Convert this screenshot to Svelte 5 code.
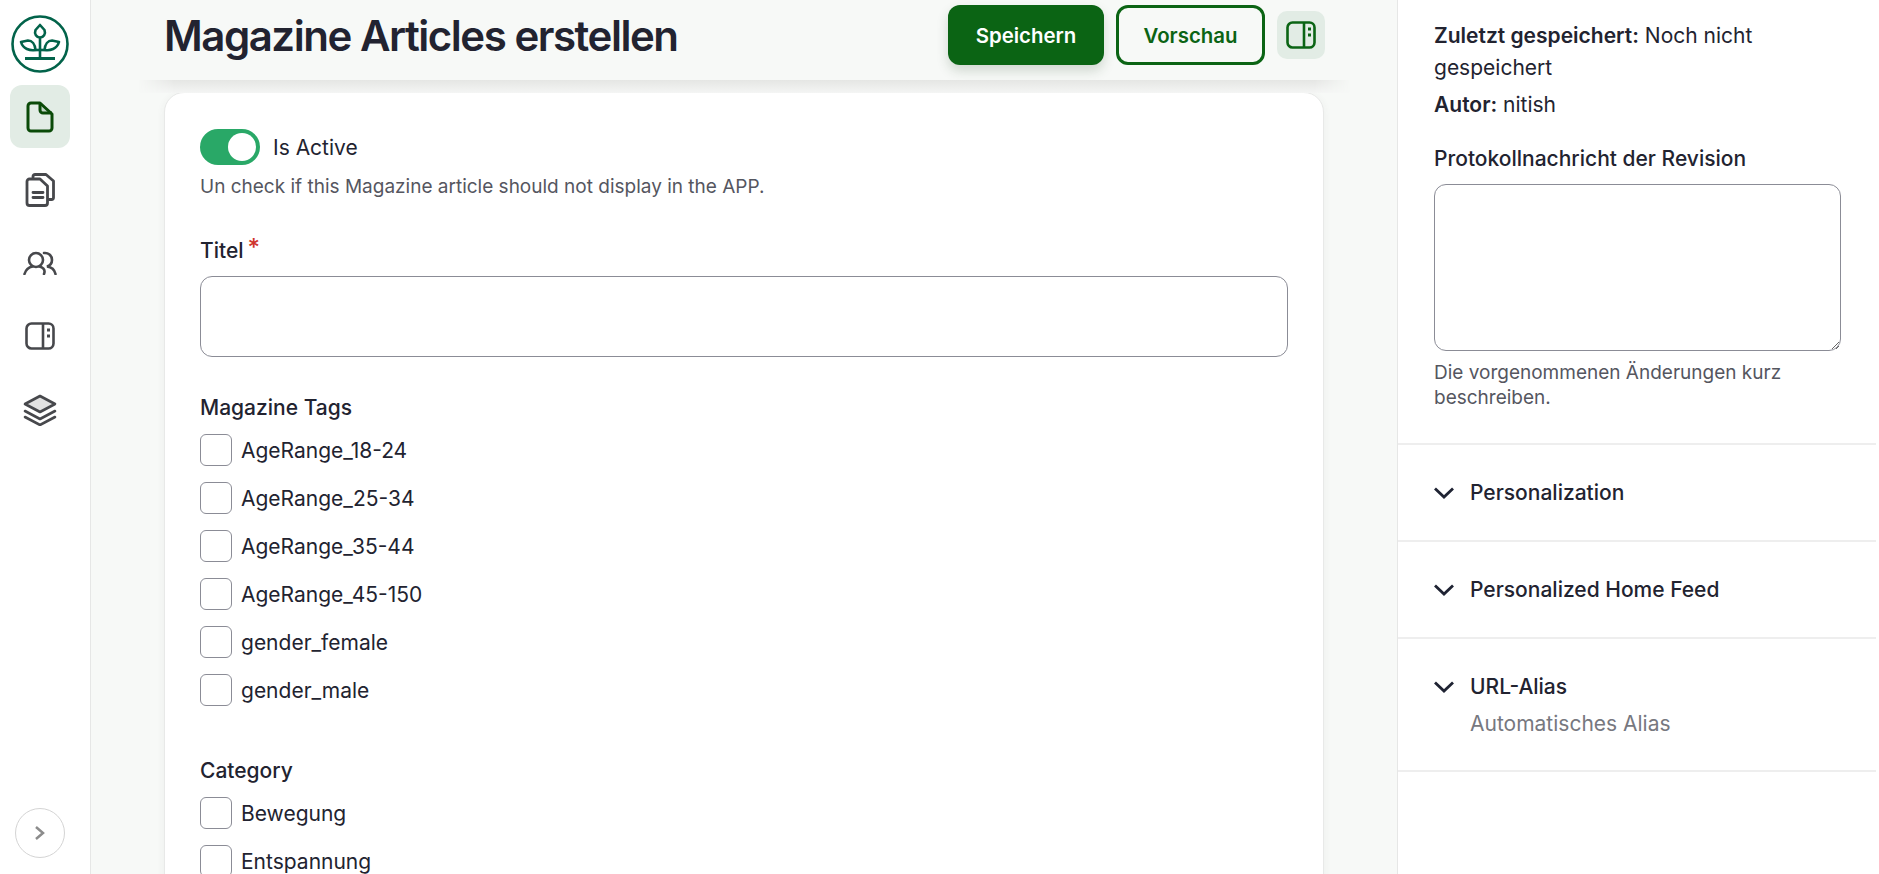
<script>
  const tags = ["AgeRange_18-24", "AgeRange_25-34", "AgeRange_35-44", "AgeRange_45-150", "gender_female", "gender_male"];
  const categories = ["Bewegung", "Entspannung"];
  const sections = [
    { title: "Personalization" },
    { title: "Personalized Home Feed" },
    { title: "URL-Alias", sub: "Automatisches Alias" }
  ];
</script>

<div class="page">
  <nav class="sidebar">
    <svg class="logo" viewBox="0 0 58 58" fill="none" stroke="#02634a" stroke-width="2.6" stroke-linejoin="round">
      <circle cx="29" cy="29" r="27.5" />
      <path d="M29 10 L33.500 15 C35 19 32.500 22.500 29 22.500 C25.500 22.500 23 19 24.500 15 Z" />
      <path d="M29 22.500 V43" />
      <path d="M10 27 L17 25.500 C21 25.500 24 29 24.500 35 C19 36 12 34 10 27 Z" />
      <path d="M48 27 L41 25.500 C37 25.500 34 29 33.500 35 C39 36 46 34 48 27 Z" />
      <path d="M24.500 35 H33.500" />
      <path d="M14 43.500 H44" stroke-width="3" />
    </svg>

    <a class="item active" href="#doc">
      <svg viewBox="0 0 28 32" width="28" height="32" fill="none" stroke="#0a4a08" stroke-width="3" stroke-linejoin="round">
        <path d="M13 2 V12 H26 L14 2 Z" fill="#c3d6c8" stroke="none" />
        <path d="M5 2 H14 L26 13 V27 A3 3 0 0 1 23 30 H5 A3 3 0 0 1 2 27 V5 A3 3 0 0 1 5 2 Z" />
        <path d="M14 2 V9 A3 3 0 0 0 17 12 H26" />
      </svg>
    </a>
    <a class="item" href="#docs">
      <svg viewBox="0 0 30 34" width="30" height="34" fill="none" stroke="#47484c" stroke-width="2.8" stroke-linejoin="round" stroke-linecap="round">
        <path d="M8 4.500 V3.500 A2 2 0 0 1 10 1.500 H21 L28.500 8 V24.500 A2 2 0 0 1 26.500 26.500 H24" />
        <path d="M4.500 6 H15 L22.500 13 V30 A2.500 2.500 0 0 1 20 32.500 H4.500 A2.500 2.500 0 0 1 2 30 V8.500 A2.500 2.500 0 0 1 4.500 6 Z" />
        <path d="M8 19.500 H18 M8 24.500 H18" />
      </svg>
    </a>
    <a class="item" href="#users">
      <svg viewBox="0 0 34 24" width="34" height="24" fill="none" stroke="#47484c" stroke-width="2.600" stroke-linecap="round">
        <circle cx="13" cy="9" r="7" />
        <path d="M1.500 23 C3 18 7 16 9.500 15.500 M16.500 15.500 C19 16 23 18 21 23" />
        <path d="M21 2 C25 1.500 29 4 29 9 C29 12 27 14.500 24 15.500 C28 16 31.500 18.500 32.500 23" />
      </svg>
    </a>
    <a class="item" href="#panel">
      <svg viewBox="0 0 30 28" width="30" height="28" fill="none" stroke="#47484c" stroke-width="2.600">
        <rect x="1.500" y="1.500" width="27" height="25" rx="5" />
        <path d="M18 1.500 V26.500" />
        <path d="M22 8 H25 M22 14 H25" stroke-width="3" />
      </svg>
    </a>
    <a class="item" href="#layers">
      <svg viewBox="0 0 34 32" width="34" height="32" fill="none" stroke="#47484c" stroke-width="2.600" stroke-linejoin="round" stroke-linecap="round">
        <path d="M17 2 L32 10 L17 18 L2 10 Z" fill="#e2e2e2" />
        <path d="M2 17 L17 25 L32 17" />
        <path d="M2 23 L17 31 L32 23" />
      </svg>
    </a>

    <button class="collapse" aria-label="Einblenden">
      <svg viewBox="0 0 12 14" width="12" height="14" fill="none" stroke="#8c8c8c" stroke-width="2.500">
        <path d="M2 1 L9 7 L2 13" />
      </svg>
    </button>
  </nav>

  <main class="main">
    <header class="top">
      <h1>Magazine Articles erstellen</h1>
      <div class="actions">
        <button class="btn primary">Speichern</button>
        <button class="btn outline">Vorschau</button>
        <button class="panel-toggle" aria-label="Seitenleiste">
          <svg viewBox="0 0 30 28" width="30" height="28" fill="none" stroke="#0b6414" stroke-width="2.600">
            <rect x="1.500" y="1.500" width="27" height="25" rx="5" />
            <path d="M18 1.500 V26.500" />
            <path d="M22 8 H25 M22 14 H25" stroke-width="3" />
          </svg>
        </button>
      </div>
    </header>

    <section class="card">
      <div class="toggle-row">
        <span class="switch"><span class="knob"></span></span>
        <span class="toggle-label">Is Active</span>
      </div>
      <p class="hint">Un check if this Magazine article should not display in the APP.</p>

      <label class="label title-label" for="titel">Titel<span class="req">*</span></label>
      <input id="titel" class="text" type="text" />

      <h3 class="label tags-label">Magazine Tags</h3>
      {#each tags as tag}
        <div class="check"><span class="box"></span>{tag}</div>
      {/each}

      <h3 class="label cat-label">Category</h3>
      {#each categories as cat}
        <div class="check"><span class="box"></span>{cat}</div>
      {/each}
    </section>
  </main>

  <aside class="side">
    <div class="meta">
      <p class="meta-line"><b>Zuletzt gespeichert:</b> Noch nicht gespeichert</p>
      <p class="meta-line author"><b>Autor:</b> nitish</p>
      <label class="label rev-label" for="rev">Protokollnachricht der Revision</label>
      <textarea id="rev" class="area"></textarea>
      <p class="hint rev-hint">Die vorgenommenen Änderungen kurz beschreiben.</p>
    </div>
    {#each sections as s}
      <div class="acc">
        <div class="acc-head">
          <svg viewBox="0 0 20 12" width="20" height="12" fill="none" stroke="#1f2333" stroke-width="2.800">
            <path d="M1 1.500 L10 10 L19 1.500" />
          </svg>
          <span>{s.title}</span>
        </div>
        {#if s.sub}<div class="acc-sub">{s.sub}</div>{/if}
      </div>
    {/each}
  </aside>
</div>

<style>
  :global(body) {
    margin: 0;
    font-family: Inter, "Liberation Sans", sans-serif;
    color: #222330;
    background: #fff;
  }

  .page {
    display: flex;
    height: 874px;
    overflow: hidden;
  }

  /* barra lateral */
  .sidebar {
    width: 80px;
    padding: 15px 10px 0 0;
    flex: none;
    border-right: 1px solid #e6e7e6;
    background: #fff;
    display: flex;
    flex-direction: column;
    align-items: center;
    box-sizing: content-box;
  }
  .logo {
    width: 58px;
    height: 58px;
    margin-bottom: 12px;
    flex: none;
  }
  .item {
    width: 60px;
    height: 63px;
    flex: none;
    margin-bottom: 10.3px;
    border-radius: 12px;
    display: flex;
    align-items: center;
    justify-content: center;
  }
  .item.active {
    background: #e2ece5;
  }
  .collapse {
    margin-top: auto;
    margin-bottom: 16px;
    width: 50px;
    height: 50px;
    border-radius: 50%;
    border: 1px solid #d4d4d4;
    background: #fff;
    display: flex;
    align-items: center;
    justify-content: center;
    padding: 0;
  }

  .main {
    flex: 1;
    min-width: 0;
    background: #f7f9f7;
    padding: 0 73px;
  }

  .top {
    position: relative;
    height: 80px;
    margin-right: -1px;
    display: flex;
    align-items: flex-start;
    justify-content: space-between;
  }
  /* sombra bajo la cabecera, se desvanece a los lados */
  .top::after {
    content: "";
    position: absolute;
    top: 100%;
    left: -26px;
    right: -26px;
    height: 13px;
    background: linear-gradient(to bottom, #e5e6e4, #f4f5f4);
    mask-image: linear-gradient(to right, transparent, #000 36px, #000 calc(100% - 36px), transparent);
  }
  h1 {
    margin: 11px 0 0;
    font-size: 42px;
    line-height: 50px;
    font-weight: 600;
    letter-spacing: -1.47px;
    color: #222330;
  }
  .actions {
    display: flex;
    align-items: center;
    gap: 12px;
    padding-top: 5px;
  }
  .btn {
    height: 60px;
    border-radius: 12px;
    font: 600 20.4px Inter, sans-serif;
    box-sizing: border-box;
  }
  .primary {
    width: 156px;
    background: #0b6414;
    color: #fff;
    border: none;
    box-shadow: 0 6px 12px rgba(40, 70, 40, 0.18);
  }
  .outline {
    width: 149px;
    background: #f7f9f7;
    color: #0b6414;
    border: 3px solid #0b6414;
  }
  .panel-toggle {
    width: 48px;
    height: 48px;
    border: none;
    border-radius: 10px;
    background: #e2ece5;
    display: flex;
    align-items: center;
    justify-content: center;
    padding: 0;
  }

  .card {
    margin-top: 12px;
    height: 900px;
    background: #fff;
    border: 1px solid #e8e9e8;
    border-radius: 20px;
    padding: 36px 35px 0;
    box-shadow: 0 2px 8px rgba(60, 70, 60, 0.06);
  }

  .toggle-row {
    display: flex;
    align-items: center;
    gap: 13px;
  }
  .switch {
    width: 60px;
    height: 36px;
    border-radius: 18px;
    background: #29a867;
    display: block;
    position: relative;
  }
  .knob {
    position: absolute;
    right: 4px;
    top: 4px;
    width: 28px;
    height: 28px;
    border-radius: 50%;
    background: #fff;
  }
  .toggle-label {
    font-size: 21px;
  }
  .hint {
    margin: 10px 0 0;
    font-size: 19px;
    line-height: 24px;
    color: #55565f;
  }
  .label {
    display: block;
    margin: 0;
    font-size: 21px;
    line-height: 24px;
    font-weight: 500;
    color: #222330;
  }
  .title-label {
    margin-top: 39px;
  }
  .req {
    color: #d0342c;
    margin-left: 4px;
    font-size: 24px;
    line-height: 20px;
    vertical-align: 2px;
  }
  .text {
    display: block;
    width: 100%;
    box-sizing: border-box;
    height: 81px;
    margin-top: 13px;
    border: 1px solid #8b8c96;
    border-radius: 12px;
    background: #fff;
  }
  .tags-label {
    margin-top: 39px;
  }
  .cat-label {
    margin-top: 53px;
  }
  .check {
    display: flex;
    align-items: center;
    gap: 9px;
    height: 32px;
    margin-top: 16px;
    font-size: 21px;
  }
  .tags-label + .check,
  .cat-label + .check {
    margin-top: 14px;
  }
  .box {
    width: 32px;
    height: 32px;
    box-sizing: border-box;
    border: 1px solid #8b8c96;
    border-radius: 6px;
  }

  /* panel derecho */
  .side {
    width: 482px;
    flex: none;
    box-sizing: border-box;
    background: #fff;
    border-left: 1px solid #e6e7e6;
    border-right: 3px solid #fff;
  }
  .meta {
    padding: 20px 35px 33px 36px;
    border-bottom: 2px solid #eeeeee;
  }
  .meta-line {
    margin: 0;
    font-size: 21px;
    line-height: 32px;
  }
  .meta-line b {
    font-weight: 600;
  }
  .author {
    margin-top: 5px;
  }
  .rev-label {
    margin-top: 26px;
  }
  .area {
    display: block;
    width: 100%;
    height: 167px;
    box-sizing: border-box;
    margin-top: 13px;
    border: 1px solid #8b8c96;
    border-radius: 12px;
  }
  .rev-hint {
    margin-top: 9px;
    line-height: 25px;
  }
  .acc {
    padding: 36px 36px 35px;
    border-bottom: 2px solid #eeeeee;
  }
  .acc-head {
    display: flex;
    align-items: center;
    gap: 16px;
    font-size: 21px;
    line-height: 24px;
    font-weight: 500;
  }
  .acc-sub {
    margin: 13px 0 0 36px;
    font-size: 21px;
    line-height: 23px;
    color: #77787f;
  }
</style>
